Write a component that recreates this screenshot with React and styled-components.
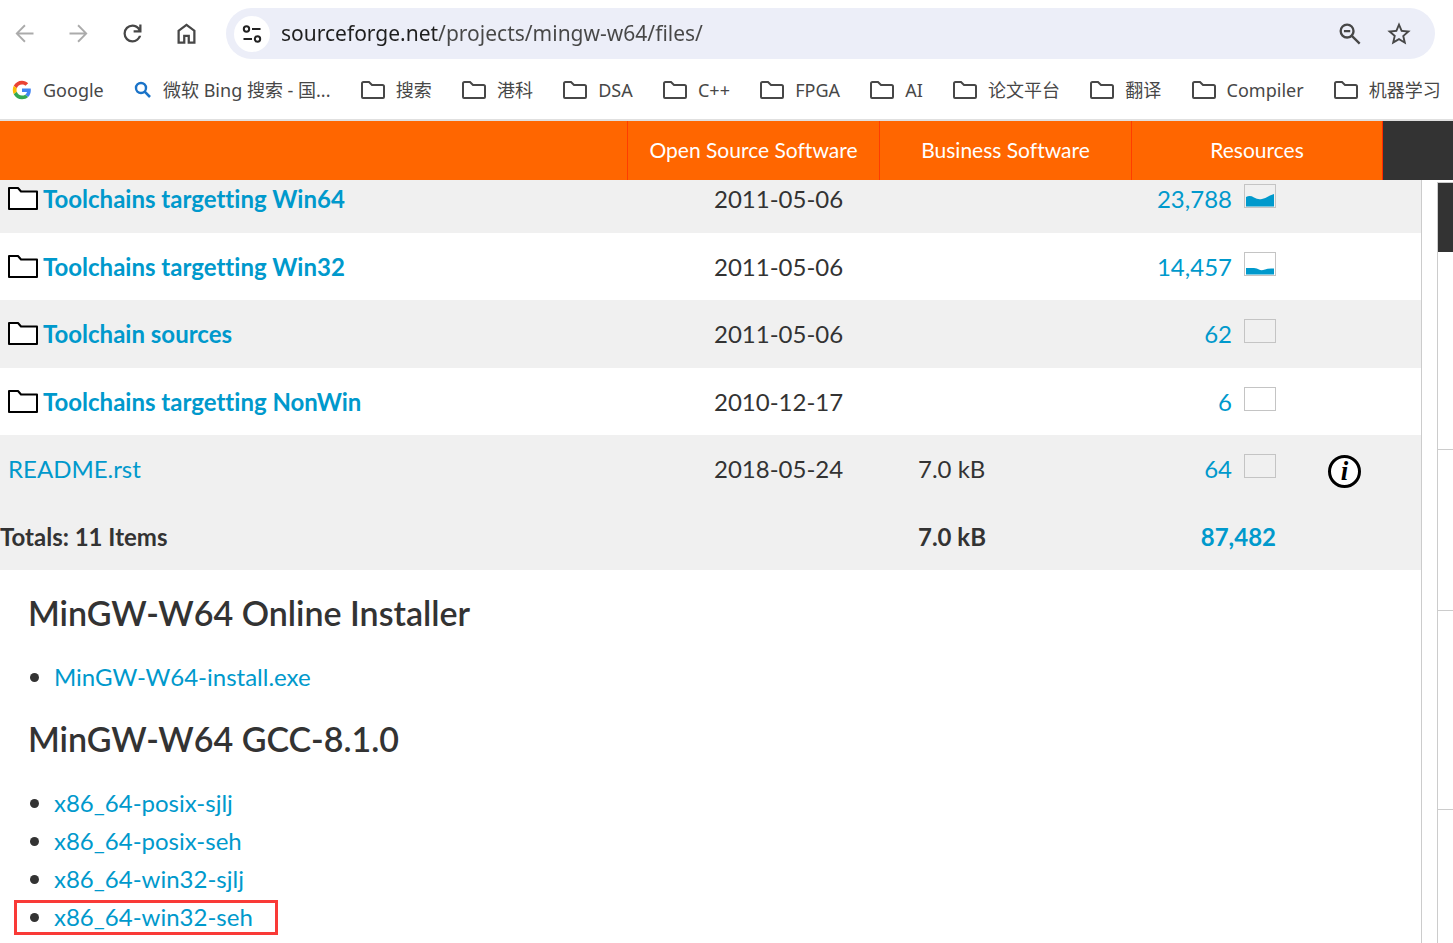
import React from 'react';
import styled, { createGlobalStyle, css } from 'styled-components';

const GlobalStyle = createGlobalStyle`
  *, *::before, *::after { box-sizing: border-box; }
  body {
    margin: 0;
    background: #fff;
    color: #333;
    font-family: Lato, "Noto Sans CJK SC", sans-serif;
    font-size: 24px;
    font-variant-ligatures: none;
  }
  a { color: #09c; text-decoration: none; }
  button { border: 0; padding: 0; background: none; cursor: pointer; }
`;

const Page = styled.div`
  display: flex;
  flex-direction: column;
  height: 100vh;
  overflow: hidden;
`;

/* Browser chrome */

const Toolbar = styled.div`
  display: flex;
  align-items: center;
  gap: 26px;
  padding: 8px 18px 0 11px;
`;

const NavButtons = styled.nav`
  display: flex;
  gap: 27px;
`;

const IconButton = styled.button`
  display: flex;
  color: ${(p) => (p.disabled ? '#ababab' : '#474747')};
`;

const AddressBar = styled.div`
  display: flex;
  flex: 1;
  align-items: center;
  height: 51px;
  padding: 0 22px 0 8px;
  border-radius: 26px;
  background: #eceef8;
`;

const SiteInfo = styled.button`
  display: flex;
  align-items: center;
  justify-content: center;
  width: 36px;
  height: 36px;
  border-radius: 50%;
  background: #fff;
  color: #222;
`;

const UrlInput = styled.input`
  flex: 1;
  min-width: 0;
  height: 36px;
  margin-left: 11px;
  padding: 0 0 2px;
  border: 0;
  outline: 0;
  font-family: "Noto Sans", sans-serif;
  font-size: 21px;
  color: #1f1f1f;
  background: linear-gradient(to right, #1f1f1f 157px, #474747 157px);
  background-clip: text;
  -webkit-background-clip: text;
  -webkit-text-fill-color: transparent;
`;

const BarActions = styled.div`
  display: flex;
  gap: 21px;
`;

const Bookmarks = styled.nav`
  display: flex;
  align-items: center;
  justify-content: space-between;
  height: 62px;
  padding: 2px 12px 0;
  border-bottom: 2px solid #e0e0e0;
`;

const Bookmark = styled.a`
  display: flex;
  align-items: center;
  gap: 11px;
  color: #474747;
  font-family: "Noto Sans", "Noto Sans CJK SC", sans-serif;
  font-size: 18px;
  line-height: 24px;
  white-space: nowrap;
`;

/* Site header */

const SiteHeader = styled.header`
  display: flex;
  flex-shrink: 0;
  justify-content: flex-end;
  height: 59px;
  background: #f60;
`;

const HeaderLink = styled.a`
  display: flex;
  align-items: center;
  justify-content: center;
  width: 252px;
  padding-bottom: 2px;
  border-left: 1px solid #ff3c00;
  color: #fff;
  font-size: 21px;
  &:last-of-type { border-right: 1px solid #ff2a00; }
`;

const HeaderEnd = styled.div`
  width: 70px;
  background: #333;
`;

/* Content */

const Main = styled.main`
  display: flex;
  flex: 1;
  gap: 15px;
  min-height: 0;
  overflow: hidden;
`;

const FilesPanel = styled.section`
  flex: 1;
  border-right: 1px solid #ccc;
`;

const FileTable = styled.table`
  width: 100%;
  margin-top: -15px;
  border-collapse: collapse;
  table-layout: fixed;
`;

const Col = styled.col`
  width: ${(p) => p.$width};
`;

const Row = styled.tr`
  height: 67px;
  &:nth-child(odd) { height: 68px; background: #f0f0f0; }
  &:last-child { background: #f0f0f0; }
`;

const cell = css`
  padding: 0 8px;
  text-align: left;
  vertical-align: middle;
  line-height: 32px;
`;

const Cell = styled.td`
  ${cell}
  font-weight: ${(p) => (p.$bold ? 700 : 400)};
`;

const NameCell = styled.th`
  ${cell}
  padding-left: ${(p) => (p.$flush ? 0 : '8px')};
  font-weight: ${(p) => (p.$bold ? 700 : 400)};
`;

const FolderLink = styled.a`
  display: flex;
  align-items: center;
  gap: 5px;
`;

const Downloads = styled.a`
  display: flex;
  align-items: center;
  justify-content: flex-end;
  gap: 12px;
`;

const Spark = styled.svg`
  display: block;
  width: 32px;
  height: 24px;
  margin-bottom: 6px;
  border: 1px solid #c4c4c4;
`;

const InfoButton = styled.button`
  display: block;
  width: 33px;
  height: 33px;
  margin: 4px 0 0 36px;
  border: 3px solid #000;
  border-radius: 50%;
  background: #fff;
  color: #000;
  font: italic bold 27px/27px "Liberation Serif", serif;
`;

const Readme = styled.article`
  padding: 16px 28px;
`;

const Heading = styled.h2`
  margin: 0;
  font-size: 34px;
  font-weight: 600;
  line-height: 54px;
`;

const LinkList = styled.ul`
  margin: 18px 0 16px;
  padding: 0;
  list-style: none;
  line-height: 38px;
`;

const LinkItem = styled.li`
  position: relative;
  display: flex;
  align-items: center;
  gap: 15px;
  padding-left: 2px;
  &::before {
    content: "";
    width: 9px;
    height: 9px;
    border-radius: 50%;
    background: #333;
  }
`;

const Highlight = styled.span`
  position: absolute;
  top: 2px;
  left: -14px;
  width: 264px;
  height: 35px;
  border: 3px solid #f93a37;
  pointer-events: none;
`;

const Sidebar = styled.aside`
  width: 16px;
  padding-top: 2px;
`;

const SideBox = styled.div`
  height: ${(p) => p.$height};
  border: 1px solid #ccc;
  border-width: 1px 0 0 1px;
`;

const SideBanner = styled.div`
  height: 69px;
  background: #333;
`;

const Icon = ({ d, size = 27 }) => (
  <svg width={size} height={size} viewBox="0 0 24 24" fill="currentColor" aria-hidden="true">
    <path d={d} />
  </svg>
);

const paths = {
  back: 'M20 11.2H7.2l5.8-5.8L11.8 4 4 12l7.8 8 1.2-1.4-5.8-5.8H20z',
  forward: 'M4 11.2h12.8L11 5.4 12.2 4l7.8 8-7.8 8-1.2-1.4 5.8-5.8H4z',
  reload:
    'M12 20q-3.35 0-5.675-2.325T4 12t2.325-5.675T12 4q1.725 0 3.3.7125T18 6.75V4h2v7h-7V9h4.2q-.8-1.4-2.1875-2.2T12 6Q9.5 6 7.75 7.75T6 12t1.75 4.25T12 18q1.925 0 3.475-1.1T17.65 14h2.1q-.7 2.65-2.85 4.325T12 20',
  home: 'M6 19h3v-6h6v6h3v-9l-6-4.5L6 10zM4 21V9l8-6 8 6v12h-7v-6h-2v6z',
  zoomOut:
    'm19.6 21-6.3-6.3q-.75.6-1.725.95T9.5 16q-2.725 0-4.6125-1.8875T3 9.5t1.8875-4.6125T9.5 3t4.6125 1.8875T16 9.5q0 1.1-.35 2.075T14.7 13.3l6.3 6.3zM9.5 14q1.875 0 3.1875-1.3125T14 9.5t-1.3125-3.1875T9.5 5 6.3125 6.3125 5 9.5t1.3125 3.1875T9.5 14M6.8 10.4V8.6h5.4v1.8z',
  star: 'm22 9.24-7.19-.62L12 2 9.19 8.63 2 9.24l5.46 4.73L5.82 21 12 17.27 18.18 21l-1.63-7.03zM12 15.4l-3.76 2.27 1-4.28-3.32-2.88 4.38-.38L12 6.1l1.71 4.04 4.38.38-3.32 2.88 1 4.28z',
};

const TuneIcon = () => (
  <svg width="20" height="20" viewBox="0 0 20 20" fill="none" stroke="currentColor" strokeWidth="2" aria-hidden="true">
    <circle cx="4.5" cy="5" r="2.7" />
    <path d="M10 5h8.5M1.5 15H10" />
    <circle cx="15.5" cy="15" r="2.7" />
  </svg>
);

const GoogleIcon = () => (
  <svg width="20" height="20" viewBox="-2 -2 52 52" aria-hidden="true">
    <path fill="#EA4335" d="M24 9.5c3.54 0 6.71 1.22 9.21 3.6l6.85-6.85C35.9 2.38 30.47 0 24 0 14.62 0 6.51 5.38 2.56 13.22l7.98 6.19C12.43 13.72 17.74 9.5 24 9.5z" />
    <path fill="#4285F4" d="M46.98 24.55c0-1.57-.15-3.09-.38-4.55H24v9.02h12.94c-.58 2.96-2.26 5.48-4.78 7.18l7.73 6c4.51-4.18 7.09-10.36 7.09-17.65z" />
    <path fill="#FBBC05" d="M10.53 28.59c-.48-1.45-.76-2.99-.76-4.59s.27-3.14.76-4.59l-7.98-6.19C.92 16.46 0 20.12 0 24c0 3.88.92 7.54 2.56 10.78l7.97-6.19z" />
    <path fill="#34A853" d="M24 48c6.48 0 11.93-2.13 15.89-5.81l-7.73-6c-2.15 1.45-4.92 2.3-8.16 2.3-6.26 0-11.57-4.22-13.47-9.91l-7.98 6.19C6.51 42.62 14.62 48 24 48z" />
  </svg>
);

const SearchIcon = () => (
  <svg width="18" height="18" viewBox="0 0 18 18" fill="none" stroke="#1a73c8" aria-hidden="true">
    <circle cx="7" cy="7" r="5" strokeWidth="2.4" />
    <path d="m10.700 10.700 5.300 5.300" strokeWidth="2.6" />
  </svg>
);

const BookmarkFolder = () => (
  <svg width="24" height="20" viewBox="0 0 24 20" fill="none" stroke="#474747" strokeWidth="2" aria-hidden="true">
    <path d="M1 17V3.500q0-1.500 1.500-1.500H8l3 3h10.500q1.500 0 1.500 1.500V17q0 1-1 1H2q-1 0-1-1z" />
  </svg>
);

const FolderIcon = () => (
  <svg width="30" height="24" viewBox="0 0 30 24" fill="#fff" stroke="#000" strokeWidth="2" strokeLinejoin="round" aria-hidden="true">
    <path d="M1 22V1h9l3 3.500h16V22z" />
  </svg>
);

const bookmarks = [
  ['Google', GoogleIcon],
  ['微软 Bing 搜索 - 国...', SearchIcon],
  ['搜索'],
  ['港科'],
  ['DSA'],
  ['C++'],
  ['FPGA'],
  ['AI'],
  ['论文平台'],
  ['翻译'],
  ['Compiler'],
  ['机器学习'],
];

const folders = [
  { name: 'Toolchains targetting Win64', date: '2011-05-06', count: '23,788', chart: 'M1 21.500V12Q5 10 9 12.500T17 14Q21 13 25 10.500L29 9v12.500z' },
  { name: 'Toolchains targetting Win32', date: '2011-05-06', count: '14,457', chart: 'M1 21.500V15h8q3 0 5 1.500t6 0Q23 15 29 15.500v6z' },
  { name: 'Toolchain sources', date: '2011-05-06', count: '62' },
  { name: 'Toolchains targetting NonWin', date: '2010-12-17', count: '6' },
];

const builds = ['x86_64-posix-sjlj', 'x86_64-posix-seh', 'x86_64-win32-sjlj', 'x86_64-win32-seh'];

const DownloadCount = ({ count, chart }) => (
  <Downloads href="#stats">
    {count}
    <Spark viewBox="0 0 30 22" aria-hidden="true">{chart && <path d={chart} fill="#09c" />}</Spark>
  </Downloads>
);

export default function App() {
  return (
    <Page>
      <GlobalStyle />
      <Toolbar>
        <NavButtons aria-label="Browser navigation">
          <IconButton disabled aria-label="Back"><Icon d={paths.back} /></IconButton>
          <IconButton disabled aria-label="Forward"><Icon d={paths.forward} /></IconButton>
          <IconButton aria-label="Reload"><Icon d={paths.reload} /></IconButton>
          <IconButton aria-label="Home"><Icon d={paths.home} /></IconButton>
        </NavButtons>
        <AddressBar>
          <SiteInfo aria-label="View site information"><TuneIcon /></SiteInfo>
          <UrlInput aria-label="Address" defaultValue="sourceforge.net/projects/mingw-w64/files/" />
          <BarActions>
            <IconButton aria-label="Zoom"><Icon d={paths.zoomOut} size={28} /></IconButton>
            <IconButton aria-label="Bookmark this page"><Icon d={paths.star} size={28} /></IconButton>
          </BarActions>
        </AddressBar>
      </Toolbar>
      <Bookmarks aria-label="Bookmarks">
        {bookmarks.map(([label, Glyph = BookmarkFolder]) => (
          <Bookmark href="#bookmark" key={label}><Glyph />{label}</Bookmark>
        ))}
      </Bookmarks>

      <SiteHeader>
        <HeaderLink href="#open-source">Open Source Software</HeaderLink>
        <HeaderLink href="#business">Business Software</HeaderLink>
        <HeaderLink href="#resources">Resources</HeaderLink>
        <HeaderEnd />
      </SiteHeader>

      <Main>
        <FilesPanel>
          <FileTable>
            <colgroup>
              <Col />
              <Col $width="204px" />
              <Col $width="204px" />
              <Col $width="170px" />
              <Col $width="137px" />
            </colgroup>
            <tbody>
              {folders.map((f) => (
                <Row key={f.name}>
                  <NameCell scope="row" $bold><FolderLink href="#folder"><FolderIcon />{f.name}</FolderLink></NameCell>
                  <Cell>{f.date}</Cell>
                  <Cell />
                  <Cell><DownloadCount count={f.count} chart={f.chart} /></Cell>
                  <Cell />
                </Row>
              ))}
              <Row>
                <NameCell scope="row"><a href="#readme">README.rst</a></NameCell>
                <Cell>2018-05-24</Cell>
                <Cell>7.0 kB</Cell>
                <Cell><DownloadCount count="64" /></Cell>
                <Cell><InfoButton aria-label="View details">i</InfoButton></Cell>
              </Row>
              <Row>
                <NameCell scope="row" $bold $flush>Totals: 11 Items</NameCell>
                <Cell />
                <Cell $bold>7.0 kB</Cell>
                <Cell $bold><Downloads href="#stats">87,482</Downloads></Cell>
                <Cell />
              </Row>
            </tbody>
          </FileTable>
          <Readme>
            <Heading>MinGW-W64 Online Installer</Heading>
            <LinkList>
              <LinkItem><a href="#install">MinGW-W64-install.exe</a></LinkItem>
            </LinkList>
            <Heading>MinGW-W64 GCC-8.1.0</Heading>
            <LinkList>
              {builds.map((b) => (
                <LinkItem key={b}>
                  <a href="#build">{b}</a>
                  {b === 'x86_64-win32-seh' && <Highlight />}
                </LinkItem>
              ))}
            </LinkList>
          </Readme>
        </FilesPanel>
        <Sidebar>
          <SideBox $height="267px"><SideBanner /></SideBox>
          <SideBox $height="161px" />
          <SideBox $height="199px" />
          <SideBox $height="200px" />
        </Sidebar>
      </Main>
    </Page>
  );
}
